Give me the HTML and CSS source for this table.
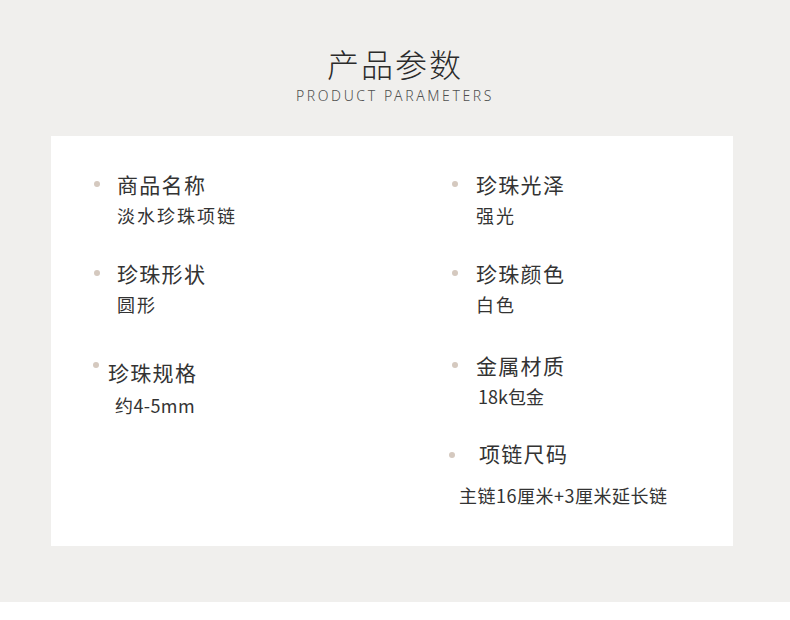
FILE: index.html
```html
<!DOCTYPE html>
<html lang="zh-CN">
<head>
    <meta charset="UTF-8">
    <meta name="viewport" content="width=device-width, initial-scale=1.0">
    <title>产品参数</title>
    <link rel="stylesheet" href="styles.css">
</head>
<body>
    <section class="params">
        <h1 class="params-title">产品参数</h1>
        <p class="params-subtitle">PRODUCT PARAMETERS</p>

        <div class="params-card">
            <!-- coluna esquerda -->
            <div class="params-col">
                <div class="param">
                    <div class="param-name"><span class="dot"></span>商品名称</div>
                    <div class="param-value">淡水珍珠项链</div>
                </div>
                <div class="param">
                    <div class="param-name"><span class="dot"></span>珍珠形状</div>
                    <div class="param-value">圆形</div>
                </div>
                <div class="param param-spec">
                    <div class="param-name"><span class="dot"></span>珍珠规格</div>
                    <div class="param-value">约4-5mm</div>
                </div>
            </div>

            <!-- coluna direita -->
            <div class="params-col params-col-right">
                <div class="param">
                    <div class="param-name"><span class="dot"></span>珍珠光泽</div>
                    <div class="param-value">强光</div>
                </div>
                <div class="param">
                    <div class="param-name"><span class="dot"></span>珍珠颜色</div>
                    <div class="param-value">白色</div>
                </div>
                <div class="param param-metal">
                    <div class="param-name"><span class="dot"></span>金属材质</div>
                    <div class="param-value">18k包金</div>
                </div>
                <div class="param param-size">
                    <div class="param-name"><span class="dot"></span>项链尺码</div>
                    <div class="param-value">主链16厘米+3厘米延长链</div>
                </div>
            </div>
        </div>
    </section>
</body>
</html>
```

FILE: styles.css
```css
body {
    margin: 0;
    background-color: #fff;
    font-family: "Noto Sans CJK SC", "Noto Sans", sans-serif;
    color: #333;
}
.params {
    background-color: #f0efed;
    padding: 43px 0 56px;
}
.params-title {
    margin: 0;
    text-align: center;
    font-size: 32px;
    font-weight: 300;
    line-height: 40px;
    letter-spacing: 2px;
    color: #2b2b2b;
}
.params-subtitle {
    margin: 3px 0 30px;
    text-align: center;
    font-family: "Noto Sans", sans-serif;
    font-size: 14px;
    font-weight: 300;
    line-height: 20px;
    letter-spacing: 2.6px;
    color: #4f4f4f;
}
.params-card {
    width: 682px;
    height: 410px;
    box-sizing: border-box;
    margin-left: 51px;
    padding: 33px 0 0 43px;
    background-color: #fff;
    display: grid;
    grid-template-columns: 358px 1fr;
}
.params-col {
    display: flex;
    flex-direction: column;
}
.param + .param {
    margin-top: 28px;
}
.param-name {
    display: flex;
    align-items: center;
    gap: 17px;
    font-size: 21px;
    line-height: 30px;
    letter-spacing: 1.3px;
}
.dot {
    width: 6px;
    height: 6px;
    border-radius: 50%;
    background-color: #d5c9bf;
}
.param-value {
    padding-left: 23px;
    margin-top: 1px;
    font-size: 18px;
    line-height: 30px;
    letter-spacing: 2px;
}

/* ajustes finos de cada item */
.param.param-spec {
    margin-top: 38px;
}
.param-spec .param-name {
    align-items: flex-start;
    gap: 9px;
}
.param-spec .dot {
    margin-top: 5px;
    margin-left: -1px;
}
.param-spec .param-value {
    padding-left: 21px;
    margin-top: 3px;
    letter-spacing: 0.4px;
}
.params-col-right .param-name {
    gap: 18px;
}
.params-col-right .param-value {
    padding-left: 24px;
}
.param.param-metal {
    margin-top: 31px;
}
.param-metal .param-value {
    padding-left: 26px;
    margin-top: 1px;
    letter-spacing: 0;
}
.param.param-size {
    margin-top: 27px;
}
.params-col-right .param-size .param-name {
    gap: 24px;
}
.param-size .dot {
    margin-left: -3px;
    margin-top: 4px;
}
.params-col-right .param-size .param-value {
    padding-left: 7px;
    margin-top: 12px;
    letter-spacing: 0.5px;
}
```
